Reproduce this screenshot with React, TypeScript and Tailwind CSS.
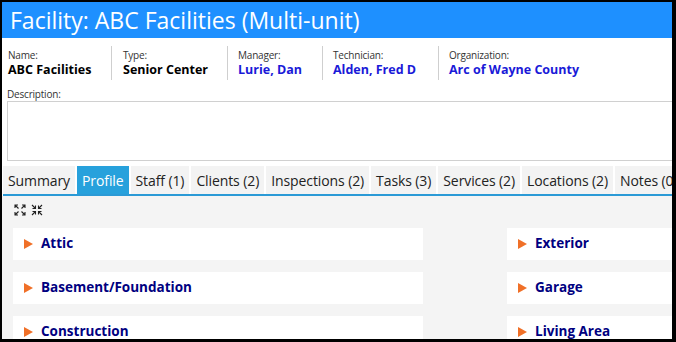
import React from 'react';

const font = { fontFamily: '"Open Sans", "Noto Sans", sans-serif' };

interface InfoField {
  label: string;
  value: string;
  link?: boolean;
  width: string;
  pad: string;
}

const fields: InfoField[] = [
  { label: 'Name:', value: 'ABC Facilities', width: 'w-[110px]', pad: 'pl-[6px]' },
  { label: 'Type:', value: 'Senior Center', width: 'w-[116px]', pad: 'pl-[11px]' },
  { label: 'Manager:', value: 'Lurie, Dan', link: true, width: 'w-[95px]', pad: 'pl-[10px]' },
  { label: 'Technician:', value: 'Alden, Fred D', link: true, width: 'w-[116px]', pad: 'pl-[10px]' },
  { label: 'Organization:', value: 'Arc of Wayne County', link: true, width: 'w-[200px]', pad: 'pl-[10px]' },
];

const tabs = [
  'Summary',
  'Profile',
  'Staff (1)',
  'Clients (2)',
  'Inspections (2)',
  'Tasks (3)',
  'Services (2)',
  'Locations (2)',
  'Notes (0)',
];

const leftSections = ['Attic', 'Basement/Foundation', 'Construction'];
const rightSections = ['Exterior', 'Garage', 'Living Area'];

const ExpandIcon = () => (
  <svg width="12" height="12" viewBox="0 0 12 12" fill="none" stroke="#222" strokeWidth={1.1}>
    <path d="M1 4V1H4M1 1L4.5 4.5" />
    <path d="M8 1H11V4M11 1L7.5 4.5" />
    <path d="M1 8V11H4M1 11L4.5 7.5" />
    <path d="M11 8V11H8M11 11L7.5 7.5" />
  </svg>
);

const CollapseIcon = () => (
  <svg width="12" height="12" viewBox="0 0 12 12" fill="none" stroke="#222" strokeWidth={1.1}>
    <path d="M1.5 4.5H4.5V1.5M4.5 4.5L1 1" />
    <path d="M10.5 4.5H7.5V1.5M7.5 4.5L11 1" />
    <path d="M1.5 7.5H4.5V10.5M4.5 7.5L1 11" />
    <path d="M10.5 7.5H7.5V10.5M7.5 7.5L11 11" />
  </svg>
);

const Section = ({ title }: { title: string }) => (
  <div className="flex items-center h-[32px] bg-white pl-[11px]">
    <span className="w-0 h-0 border-y-[5px] border-y-transparent border-l-[9px] border-l-[#f07028]" />
    <span className="ml-[8px] text-[13.5px] font-bold text-[#000080] leading-none">{title}</span>
  </div>
);

export default function App() {
  return (
    <div className="w-[676px] h-[342px] bg-black pt-[2px] pl-[2px] pr-[4px] pb-[3px]" style={font}>
      <div className="w-full h-full bg-white overflow-hidden flex flex-col">
        <div className="h-[36px] shrink-0 bg-[#1e90ff] flex items-center pl-[8px]">
          <h1 className="text-[23px] text-white leading-none whitespace-nowrap">
            Facility: ABC Facilities (Multi-unit)
          </h1>
        </div>

        <div className="flex pt-[8px] shrink-0">
          {fields.map((f, i) => (
            <div
              key={f.label}
              className={`${f.width} ${f.pad} shrink-0 h-[34px] flex flex-col justify-center ${
                i < fields.length - 1 ? 'border-r border-[#cfcfcf]' : ''
              }`}
            >
              <div className="text-[10px] leading-[14px] text-[#333] tracking-[-0.2px]">{f.label}</div>
              <div
                className={`text-[12.5px] leading-[16px] font-bold whitespace-nowrap ${
                  f.link ? 'text-[#1a1ad8]' : 'text-black'
                }`}
              >
                {f.value}
              </div>
            </div>
          ))}
        </div>

        <div className="pl-[5px] pt-[8px] shrink-0">
          <div className="text-[10px] leading-[12px] text-[#333] tracking-[-0.2px]">Description:</div>
          <div className="mt-[1px] h-[60px] w-[800px] border border-[#d0d0d0] bg-white" />
        </div>

        <div className="mt-[5px] ml-[1px] flex gap-[2px] border-b-2 border-[#2b9ad6] shrink-0 w-[900px]">
          {tabs.map((t) => (
            <div
              key={t}
              className={`h-[28px] px-[5px] flex items-center text-[14px] whitespace-nowrap tracking-[-0.1px] ${
                t === 'Profile' ? 'bg-[#27a1dc] text-white' : 'bg-[#f3f3f3] text-[#222]'
              }`}
            >
              {t}
            </div>
          ))}
        </div>

        <div className="flex-1 bg-[#f4f4f4] pl-[11px]">
          <div className="flex gap-[5px] pt-[8px] pl-[1px]">
            <ExpandIcon />
            <CollapseIcon />
          </div>
          <div className="flex gap-[84px] mt-[12px] w-[1000px]">
            <div className="w-[410px] flex flex-col gap-[12px]">
              {leftSections.map((s) => (
                <Section key={s} title={s} />
              ))}
            </div>
            <div className="w-[410px] flex flex-col gap-[12px]">
              {rightSections.map((s) => (
                <Section key={s} title={s} />
              ))}
            </div>
          </div>
        </div>
      </div>
    </div>
  );
}
